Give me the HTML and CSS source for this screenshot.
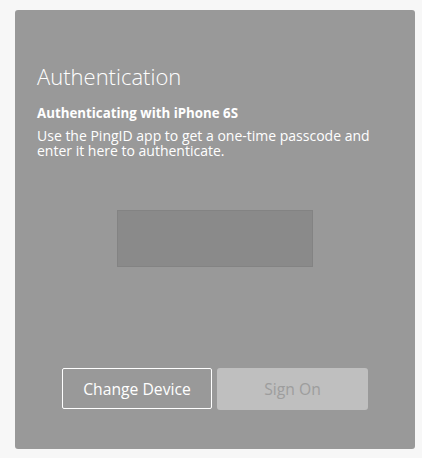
FILE: index.html
```html
<!DOCTYPE html>
<html>
<head>
<meta charset="utf-8">
<link rel="stylesheet" href="styles.css">
</head>
<body>
<div class="card">
  <h1 class="title">Authentication</h1>
  <p class="subtitle">Authenticating with iPhone 6S</p>
  <p class="desc">Use the PingID app to get a one-time passcode and enter it here to authenticate.</p>
  <div class="field-row"><div class="field"></div></div>
  <div class="actions">
    <button class="btn btn-outline">Change Device</button>
    <button class="btn btn-disabled">Sign On</button>
  </div>
</div>
</body>
</html>
```
FILE: styles.css
```css
html, body {
  margin: 0;
  padding: 0;
  background: #f7f7f7;
}
body {
  font-family: "Open Sans", Lato, sans-serif;
  color: #fff;
}
.card {
  box-sizing: border-box;
  margin: 10px 0 0 15px;
  width: 400px;
  height: 439px;
  background: #999999;
  border-radius: 3px;
  padding: 53px 22px 0 22px;
}
.title {
  margin: 0;
  font-size: 22px;
  font-weight: 300;
  line-height: 26px;
}
.subtitle {
  margin: 15px 0 0;
  font-size: 13.3px;
  font-weight: 700;
  line-height: 18px;
}
.desc {
  margin: 6px 0 0;
  font-size: 14px;
  line-height: 15px;
  width: 350px;
}
.field-row {
  display: flex;
  justify-content: center;
  margin-top: 52px;
}
.field {
  box-sizing: border-box;
  width: 196px;
  height: 57px;
  background: #8a8a8a;
  border: 1px solid #838383;
}
.actions {
  display: flex;
  justify-content: center;
  align-items: flex-start;
  gap: 5px;
  margin-top: 101px;
}
.btn {
  box-sizing: border-box;
  width: 151px;
  height: 42px;
  font-family: "Open Sans", Lato, sans-serif;
  font-size: 15.7px;
  border-radius: 2px;
  padding: 0;
}
.btn-outline {
  width: 150px;
  height: 41px;
  background: transparent;
  border: 1px solid #ffffff;
  color: #fff;
}
.btn-disabled {
  background: #bfbfbf;
  border: none;
  color: #9d9d9d;
  border-radius: 3px;
}
```
